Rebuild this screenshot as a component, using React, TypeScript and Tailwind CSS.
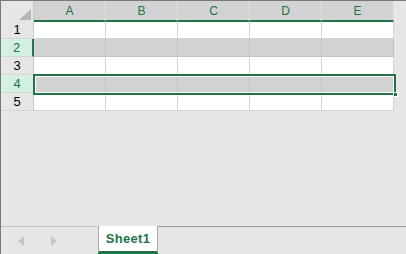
import React from 'react'

const cols = ['A', 'B', 'C', 'D', 'E']
const rows = [1, 2, 3, 4, 5]

function Corner() {
  return (
    <div className="relative w-[33px] shrink-0 bg-[#e6e6e6] border-r border-[#c8c8c8]">
      <svg className="absolute right-[2px] bottom-[2px]" width="12" height="11" viewBox="0 0 12 11">
        <polygon points="12,0 12,11 0,11" fill="#b5b5b5" />
      </svg>
    </div>
  )
}

export default function App() {
  return (
    <div className="relative w-[406px] h-[254px] bg-[#e6e6e6] border-t border-l border-[#7a7a7a] flex flex-col overflow-hidden font-['Liberation_Sans',Arial,sans-serif]">
      <div className="relative">
        {/* column headers */}
        <div className="flex h-[21px]">
          <Corner />
          {cols.map(c => (
            <div
              key={c}
              className="w-[72px] shrink-0 bg-[#d2d2d2] border-r border-[#e2e2e2] border-b-2 border-b-[#217346] flex items-center justify-center text-[12px] text-[#217346]"
            >
              {c}
            </div>
          ))}
          <div className="flex-1 bg-[#e6e6e6]" />
        </div>

        {/* rows */}
        {rows.map(r => {
          const selected = r === 2 || r === 4
          return (
            <div key={r} className={`flex ${r === 1 ? 'h-[17px]' : 'h-[18px]'}`}>
              <div
                className={
                  selected
                    ? `w-[33px] shrink-0 bg-[#d3f0e0] text-[#217346] border-b border-[#c8dccf] ${r === 2 ? 'border-r-2 border-r-[#217346]' : 'border-r border-r-[#c8c8c8]'} flex items-center justify-center text-[13px]`
                    : 'w-[33px] shrink-0 bg-[#e6e6e6] text-black border-b border-[#d6d6d6] border-r border-r-[#c8c8c8] flex items-center justify-center text-[13px]'
                }
              >
                {r}
              </div>
              {cols.map(c => (
                <div
                  key={c}
                  className={`w-[72px] shrink-0 border-r border-b ${selected ? 'bg-[#d2d2d2] border-[#c2c2c2]' : 'bg-white border-[#d4d4d4]'}`}
                />
              ))}
              <div className="flex-1 bg-[#e6e6e6]" />
            </div>
          )
        })}

        {/* active selection */}
        <div className="absolute left-[32px] top-[73px] w-[363px] h-[21px] border-2 border-[#217346]">
          <div className="w-full h-full border border-white" />
          <div className="absolute -right-[4px] -bottom-[4px] w-[5px] h-[5px] bg-[#217346] border border-white" />
        </div>
      </div>

      <div className="flex-1" />

      {/* sheet tabs */}
      <div className="flex h-[28px]">
        <div className="w-[97px] shrink-0 border-t border-[#c4c4c4] flex items-center">
          <svg className="ml-[17px]" width="6" height="10" viewBox="0 0 6 10">
            <polygon points="6,0 6,10 0,5" fill="#c4c4c4" />
          </svg>
          <svg className="ml-[27px]" width="6" height="10" viewBox="0 0 6 10">
            <polygon points="0,0 0,10 6,5" fill="#c4c4c4" />
          </svg>
        </div>
        <div className="w-[60px] shrink-0 bg-white border-x border-[#a8a8a8] border-b-[3px] border-b-[#217346] flex items-center justify-center text-[13px] font-bold text-[#217346] tracking-[0.3px] pt-[1px]">
          Sheet1
        </div>
        <div className="flex-1 border-t border-[#9a9a9a]" />
      </div>
    </div>
  )
}
